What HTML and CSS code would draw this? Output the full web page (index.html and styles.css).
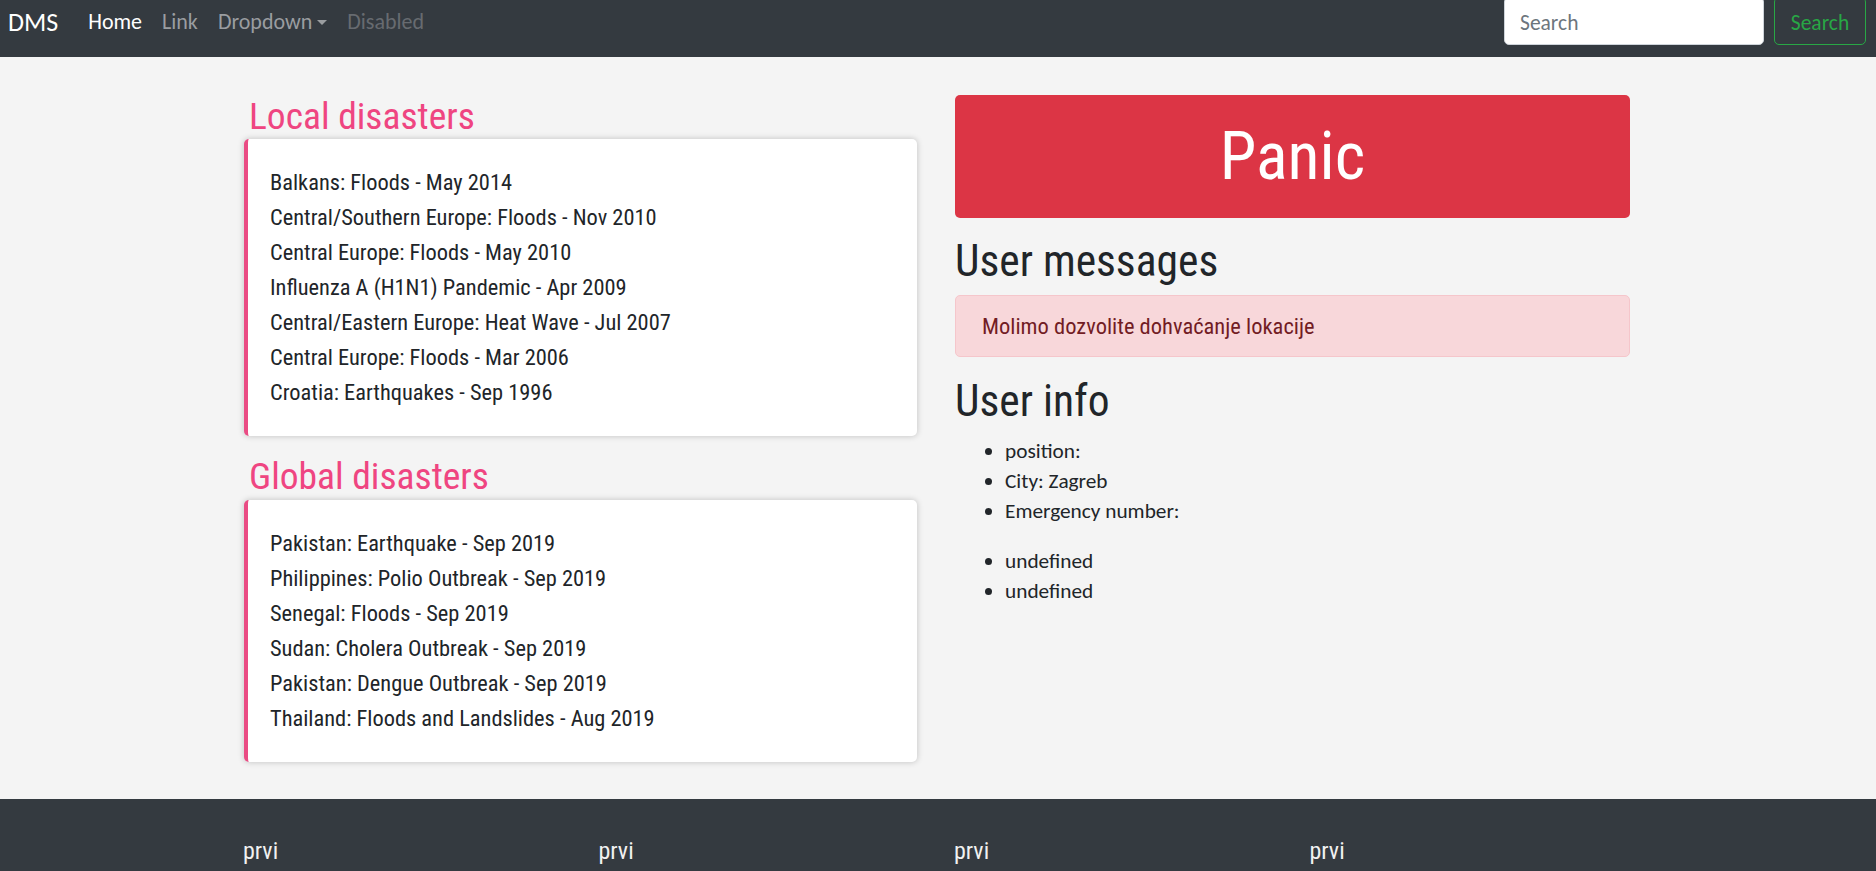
FILE: index.html
```html
<!DOCTYPE html>
<html lang="hr">
<head>
<meta charset="utf-8">
<title>DMS</title>
<link rel="stylesheet" href="styles.css">
</head>
<body>
<nav class="navbar">
  <a class="brand" href="#">DMS</a>
  <ul class="nav">
    <li><a class="nav-link active" href="#">Home</a></li>
    <li><a class="nav-link" href="#">Link</a></li>
    <li><a class="nav-link dropdown" href="#">Dropdown<span class="caret"></span></a></li>
    <li><a class="nav-link disabled" href="#">Disabled</a></li>
  </ul>
  <form class="search">
    <input class="search-input" type="text" placeholder="Search">
    <button class="search-btn" type="button">Search</button>
  </form>
</nav>

<main class="main">
  <div class="container">
    <section class="col">
      <h2 class="section-title">Local disasters</h2>
      <div class="card">
        <ul class="disasters">
          <li>Balkans: Floods - May 2014</li>
          <li>Central/Southern Europe: Floods - Nov 2010</li>
          <li>Central Europe: Floods - May 2010</li>
          <li>Influenza A (H1N1) Pandemic - Apr 2009</li>
          <li>Central/Eastern Europe: Heat Wave - Jul 2007</li>
          <li>Central Europe: Floods - Mar 2006</li>
          <li>Croatia: Earthquakes - Sep 1996</li>
        </ul>
      </div>
      <h2 class="section-title">Global disasters</h2>
      <div class="card">
        <ul class="disasters">
          <li>Pakistan: Earthquake - Sep 2019</li>
          <li>Philippines: Polio Outbreak - Sep 2019</li>
          <li>Senegal: Floods - Sep 2019</li>
          <li>Sudan: Cholera Outbreak - Sep 2019</li>
          <li>Pakistan: Dengue Outbreak - Sep 2019</li>
          <li>Thailand: Floods and Landslides - Aug 2019</li>
        </ul>
      </div>
    </section>
    <section class="col">
      <button class="panic" type="button">Panic</button>
      <h2 class="block-title">User messages</h2>
      <div class="alert">Molimo dozvolite dohvaćanje lokacije</div>
      <h2 class="block-title">User info</h2>
      <ul class="info">
        <li>position:</li>
        <li>City: Zagreb</li>
        <li>Emergency number:</li>
      </ul>
      <ul class="info">
        <li>undefined</li>
        <li>undefined</li>
      </ul>
    </section>
  </div>
</main>

<footer class="footer">
  <div class="footer-grid">
    <div class="footer-col">prvi</div>
    <div class="footer-col">prvi</div>
    <div class="footer-col">prvi</div>
    <div class="footer-col">prvi</div>
  </div>
</footer>
</body>
</html>
```
FILE: styles.css
```css
* { box-sizing: border-box; }

html, body {
  margin: 0;
  padding: 0;
}

body {
  background: #f4f4f4;
  color: #212529;
  font-family: Carlito, "Liberation Sans", sans-serif;
  font-size: 20px;
  line-height: 30px;
  overflow: hidden;
}

/* ---------- navbar ---------- */
.navbar {
  height: 57px;
  background: #343a40;
  display: flex;
  align-items: flex-start;
  padding: 0 10px 0 8px;
}

.brand {
  font-family: Carlito, sans-serif;
  font-size: 26px;
  line-height: 44px;
  color: #fff;
  text-decoration: none;
  margin-right: 20px;
}

.nav {
  list-style: none;
  margin: 0;
  padding: 0;
  display: flex;
}

.nav-link {
  display: block;
  padding: 0 10px;
  font-size: 22px;
  line-height: 44px;
  color: #9a9da0;
  text-decoration: none;
}

.nav-link.active { color: #fff; }
.nav-link.disabled { color: #676b70; }

.caret {
  display: inline-block;
  margin-left: 5px;
  vertical-align: 4px;
  border-top: 5px solid currentColor;
  border-left: 5px solid transparent;
  border-right: 5px solid transparent;
}

.search {
  margin-left: auto;
  margin-top: -3px;
  display: flex;
  gap: 10px;
}

.search-input {
  width: 260px;
  height: 48px;
  border: 1px solid #ced4da;
  border-radius: 5px;
  background: #fff;
  padding: 3px 15px 0;
  font-family: Carlito, sans-serif;
  font-size: 21.5px;
  color: #495057;
}

.search-input::placeholder { color: #6c757d; }

.search-btn {
  width: 92px;
  height: 48px;
  border: 1px solid #28a745;
  border-radius: 5px;
  background: transparent;
  color: #28a745;
  padding: 3px 0 0;
  font-family: Carlito, sans-serif;
  font-size: 21.5px;
}

/* ---------- main ---------- */
.main {
  padding: 38px 0 37px;
}

.container {
  width: 1388px;
  margin: 0 auto;
  padding-right: 2px;
  display: grid;
  grid-template-columns: 673px 675px;
  column-gap: 38px;
  align-items: start;
}

.section-title {
  margin: 0 0 2px;
  padding-left: 5px;
  font-family: "Roboto Condensed", sans-serif;
  font-weight: 400;
  font-size: 37.5px;
  line-height: 42px;
  color: #ef4581;
}

.card + .section-title { margin-bottom: 3px; }

.card {
  background: #fff;
  border-left: 4px solid #ea4c84;
  border-radius: 5px;
  box-shadow: 0 0 6px rgba(0, 0, 0, 0.22);
  padding: 26px 22px 26px;
  margin-bottom: 19px;
}

.card:last-child { margin-bottom: 0; }

.disasters {
  list-style: none;
  margin: 0;
  padding: 0;
  font-family: "Roboto Condensed", sans-serif;
  font-size: 22.4px;
  line-height: 35px;
  color: #212529;
}

.panic {
  display: block;
  width: 100%;
  height: 123px;
  border: 0;
  border-radius: 5px;
  background: #dc3545;
  color: #fff;
  font-family: "Roboto Condensed", sans-serif;
  font-size: 66px;
  line-height: 1;
  padding: 0;
  margin-bottom: 20px;
}

.block-title {
  margin: 0 0 9px;
  font-family: "Roboto Condensed", sans-serif;
  font-weight: 400;
  font-size: 43.5px;
  line-height: 48px;
  color: #212529;
}

.alert {
  background: #f8d7da;
  border: 1px solid #f5c6cb;
  border-radius: 5px;
  color: #721c24;
  padding: 15px 26px;
  font-family: "Roboto Condensed", sans-serif;
  font-size: 22.5px;
  line-height: 30px;
  margin-bottom: 21px;
}

.alert + .block-title { margin-bottom: 10px; }

.info {
  margin: 0 0 20px;
  padding-left: 50px;
  font-size: 21.3px;
  line-height: 30px;
}

/* ---------- footer ---------- */
.footer {
  background: #343a40;
  padding-top: 37px;
  height: 120px;
}

.footer-grid {
  width: 1388px;
  margin: 0 auto;
  padding-right: 2px;
  display: grid;
  grid-template-columns: repeat(4, 317.5px);
  column-gap: 38px;
}

.footer-col {
  font-family: "Roboto Condensed", sans-serif;
  font-size: 24px;
  line-height: 30px;
  color: #f1f1f1;
  margin-left: -1px;
}
```
